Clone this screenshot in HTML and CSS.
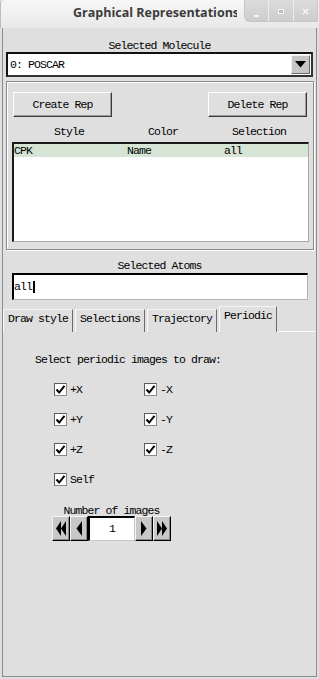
FILE: index.html
```html
<!DOCTYPE html>
<html>
<head>
<meta charset="utf-8">
<title>Graphical Representations</title>
<link rel="stylesheet" href="styles.css">
</head>
<body>
<div class="titlebar">
  <div class="title">Graphical Representations</div>
  <div class="wbtns">
    <div class="wbtn"><span class="ico-min"></span></div>
    <div class="wbtn sep"><span class="ico-max"></span></div>
    <div class="wbtn sep">
      <svg class="ico-close" width="7" height="7" viewBox="0 0 7 7"><path d="M1 1L6 6M6 1L1 6" stroke="#f6f6f6" stroke-width="1.6"/></svg>
    </div>
  </div>
</div>
<div class="frame">
  <div class="label mol-label">Selected Molecule</div>
  <div class="combo">
    <span class="combo-text">0: POSCAR</span>
    <span class="combo-arrow"><svg width="11" height="7" viewBox="0 0 11 7"><polygon points="0,0 11,0 5.5,6.5" fill="#000"/></svg></span>
  </div>
  <div class="group">
    <div class="btnrow">
      <div class="btn">Create Rep</div>
      <div class="btn">Delete Rep</div>
    </div>
    <div class="heads">
      <span class="h1">Style</span><span class="h2">Color</span><span class="h3">Selection</span>
    </div>
    <div class="listbox">
      <div class="lrow sel"><span class="c1">CPK</span><span class="c2">Name</span><span class="c3">all</span></div>
    </div>
  </div>
  <div class="label atoms-label">Selected Atoms</div>
  <div class="entry"><span>all</span><span class="caret"></span></div>
  <div class="tabs">
    <div class="tab">Draw style</div>
    <div class="tab">Selections</div>
    <div class="tab">Trajectory</div>
    <div class="tab active">Periodic</div>
    <div class="tabfill"></div>
  </div>
  <div class="panel">
    <div class="prompt">Select periodic images to draw:</div>
    <div class="checks">
      <div class="chk"><span class="box"><svg width="11" height="11" viewBox="0 0 11 11"><path d="M1.5 5.5L4.2 8.5L9.5 1.8" fill="none" stroke="#000" stroke-width="2"/></svg></span><span>+X</span></div>
      <div class="chk"><span class="box"><svg width="11" height="11" viewBox="0 0 11 11"><path d="M1.5 5.5L4.2 8.5L9.5 1.8" fill="none" stroke="#000" stroke-width="2"/></svg></span><span>-X</span></div>
      <div class="chk"><span class="box"><svg width="11" height="11" viewBox="0 0 11 11"><path d="M1.5 5.5L4.2 8.5L9.5 1.8" fill="none" stroke="#000" stroke-width="2"/></svg></span><span>+Y</span></div>
      <div class="chk"><span class="box"><svg width="11" height="11" viewBox="0 0 11 11"><path d="M1.5 5.5L4.2 8.5L9.5 1.8" fill="none" stroke="#000" stroke-width="2"/></svg></span><span>-Y</span></div>
      <div class="chk"><span class="box"><svg width="11" height="11" viewBox="0 0 11 11"><path d="M1.5 5.5L4.2 8.5L9.5 1.8" fill="none" stroke="#000" stroke-width="2"/></svg></span><span>+Z</span></div>
      <div class="chk"><span class="box"><svg width="11" height="11" viewBox="0 0 11 11"><path d="M1.5 5.5L4.2 8.5L9.5 1.8" fill="none" stroke="#000" stroke-width="2"/></svg></span><span>-Z</span></div>
      <div class="chk"><span class="box"><svg width="11" height="11" viewBox="0 0 11 11"><path d="M1.5 5.5L4.2 8.5L9.5 1.8" fill="none" stroke="#000" stroke-width="2"/></svg></span><span>Self</span></div>
    </div>
    <div class="spinwrap">
      <div class="spinlabel">Number of images</div>
      <div class="spin">
        <div class="sbtn"><svg width="10" height="15" viewBox="0 0 10 15"><polygon points="5,0 0,7.5 5,15" fill="#000"/><polygon points="10,0 5,7.5 10,15" fill="#000"/></svg></div>
        <div class="sbtn"><svg width="6" height="15" viewBox="0 0 6 15"><polygon points="6,0 0.5,7.5 6,15" fill="#000"/></svg></div>
        <div class="sentry">1</div>
        <div class="sbtn"><svg width="6" height="15" viewBox="0 0 6 15"><polygon points="0,0 5.5,7.5 0,15" fill="#000"/></svg></div>
        <div class="sbtn"><svg width="10" height="15" viewBox="0 0 10 15"><polygon points="0,0 5,7.5 0,15" fill="#000"/><polygon points="5,0 10,7.5 5,15" fill="#000"/></svg></div>
      </div>
    </div>
  </div>
</div>
</body>
</html>
```
FILE: styles.css
```css
html, body {
  margin: 0;
  padding: 0;
}
body {
  width: 319px;
  height: 679px;
  overflow: hidden;
  background: #dfdfdf;
  font-family: "Liberation Mono", "DejaVu Sans Mono", monospace;
  font-size: 11.5px;
  letter-spacing: -0.9px;
  color: #000;
}

/* title bar */
.titlebar {
  height: 28px;
  display: flex;
  align-items: flex-start;
  background: linear-gradient(#f7f7f7, #e8e8e8);
  border-left: 1px solid #bcbcbc;
  border-top-left-radius: 4px;
  box-sizing: border-box;
}
.title {
  flex: none;
  width: 236px;
  box-sizing: border-box;
  padding-left: 72px;
  overflow: hidden;
  white-space: nowrap;
  font-family: "Open Sans", "Noto Sans", sans-serif;
  font-weight: bold;
  font-size: 12.5px;
  letter-spacing: 0;
  line-height: 26px;
  color: #3b3b3b;
}
.wbtns {
  flex: 1;
  display: flex;
  height: 22px;
  margin-left: 7px;
  margin-right: 1px;
  background: linear-gradient(#dcdcdc, #cdcdcd);
  border: 1px solid #c6c6c6;
  border-top: 0;
  border-bottom-left-radius: 6px;
  box-sizing: border-box;
}
.wbtn {
  flex: 1;
  display: flex;
  align-items: center;
  justify-content: center;
}
.wbtn.sep {
  border-left: 1px solid #ececec;
}
.ico-min {
  width: 5px;
  height: 2px;
  margin-top: 11px;
  background: #f6f6f6;
}
.ico-max {
  width: 4px;
  height: 3px;
  border: 1px solid #f6f6f6;
  background: #bdbdbd;
  margin-top: 1px;
}
.ico-close {
  margin-top: 1px;
}

/* main frame */
.frame {
  margin: 0 2px;
  height: 649px;
  box-sizing: border-box;
  border: 1px solid #8c8c8c;
  border-top: 0;
  display: flow-root;
}
.label {
  text-align: center;
  line-height: 12px;
  height: 12px;
}
.mol-label {
  margin-top: 12px;
}
.combo {
  margin: 0 3px;
  height: 25px;
  box-sizing: border-box;
  border: 2px solid #111;
  border-right-color: #333;
  border-bottom-color: #333;
  background: #fff;
  display: flex;
  align-items: center;
}
.combo-text {
  padding-left: 2px;
}
.combo-arrow {
  margin-left: auto;
  margin-right: 1px;
  width: 19px;
  height: 19px;
  box-sizing: border-box;
  background: #c6c6c6;
  border: 1px solid;
  border-color: #f2f2f2 #6a6a6a #6a6a6a #f2f2f2;
  display: flex;
  align-items: center;
  justify-content: center;
}

/* representations group */
.group {
  margin: 4px 2px 0 3px;
  border: 1px solid #8a8a8a;
  box-shadow: inset 1px 1px 0 #fff, 1px 1px 0 #fff;
  padding: 10px 4px 7px 5px;
}
.btnrow {
  display: flex;
  justify-content: space-between;
  padding: 0 2px 0 1px;
}
.btn {
  width: 99px;
  height: 25px;
  box-sizing: border-box;
  border: 1px solid;
  border-color: #fff #3a3a3a #3a3a3a #fff;
  box-shadow: inset -1px -1px 0 #9c9c9c;
  text-align: center;
  line-height: 23px;
}
.heads {
  display: flex;
  margin-top: 9px;
  line-height: 12px;
  height: 12px;
}
.h1 {
  flex: none;
  width: 114px;
  text-align: center;
}
.h2 {
  flex: none;
  width: 74px;
  text-align: center;
}
.h3 {
  flex: 1;
  padding-left: 32px;
}
.listbox {
  margin-top: 4px;
  height: 100px;
  box-sizing: border-box;
  background: #fff;
  border-style: solid;
  border-width: 2px 1px 1px 2px;
  border-color: #1a1a1a #a8a8a8 #a8a8a8 #1a1a1a;
}
.lrow {
  display: flex;
  height: 13px;
  line-height: 13px;
}
.lrow.sel {
  background: #d6e4d6;
}
.c1 { width: 113px; flex: none; }
.c2 { width: 97px; flex: none; }
.c3 { flex: 1; }

/* selected atoms */
.atoms-label {
  margin-top: 10px;
}
.entry {
  margin: 1px 8px 0 9px;
  height: 27px;
  box-sizing: border-box;
  background: #fff;
  border-style: solid;
  border-width: 2px 1px 1px 2px;
  border-color: #000 #b4b4b4 #b4b4b4 #000;
  line-height: 24px;
  display: flex;
  align-items: center;
}
.caret {
  display: inline-block;
  width: 2px;
  height: 12px;
  background: #000;
  margin-left: 1px;
}

/* tabs */
.tabs {
  margin-top: 6px;
  height: 26px;
  display: flex;
  align-items: flex-end;
}
.tab {
  flex: none;
  height: 23px;
  box-sizing: border-box;
  padding: 0 4px;
  margin-right: 2px;
  border-top: 1px solid #f4f4f4;
  border-left: 1px solid #fafafa;
  border-right: 1px solid #6c6c6c;
  line-height: 18px;
}
.tab.active {
  height: 26px;
  margin-right: 0;
}
.tabfill {
  flex: 1;
  height: 1px;
  background: #fafafa;
}

/* periodic panel */
.panel {
  padding-top: 22px;
}
.prompt {
  margin-left: 32px;
  line-height: 12px;
  height: 12px;
}
.checks {
  margin: 9px 0 0 51px;
  display: grid;
  grid-template-columns: 90px 90px;
  grid-auto-rows: 30px;
}
.chk {
  margin-top: 8px;
  height: 13px;
  display: flex;
  align-items: center;
  line-height: 13px;
}
.box {
  width: 13px;
  height: 13px;
  box-sizing: border-box;
  background: #fff;
  border: 1px solid #5e5e5e;
  border-right-color: #8a8a8a;
  border-bottom-color: #8a8a8a;
  display: flex;
  align-items: center;
  justify-content: center;
  margin-right: 3px;
}
.spinwrap {
  margin: 10px 0 0 49px;
  width: 119px;
  display: flex;
  flex-direction: column;
  align-items: center;
}
.spinlabel {
  line-height: 11px;
  height: 11px;
}
.spin {
  display: flex;
  height: 25px;
}
.sbtn {
  width: 18px;
  height: 25px;
  box-sizing: border-box;
  background: #c8c8c8;
  border: 1px solid;
  border-color: #f4f4f4 #000 #000 #f4f4f4;
  box-shadow: inset -1px -1px 0 #8a8a8a;
  display: flex;
  align-items: center;
  justify-content: center;
}
.sentry {
  width: 47px;
  height: 25px;
  box-sizing: border-box;
  background: #fff;
  border-style: solid;
  border-width: 2px 1px 1px 2px;
  border-color: #000 #c8c8c8 #c8c8c8 #000;
  text-align: center;
  line-height: 22px;
}
```
